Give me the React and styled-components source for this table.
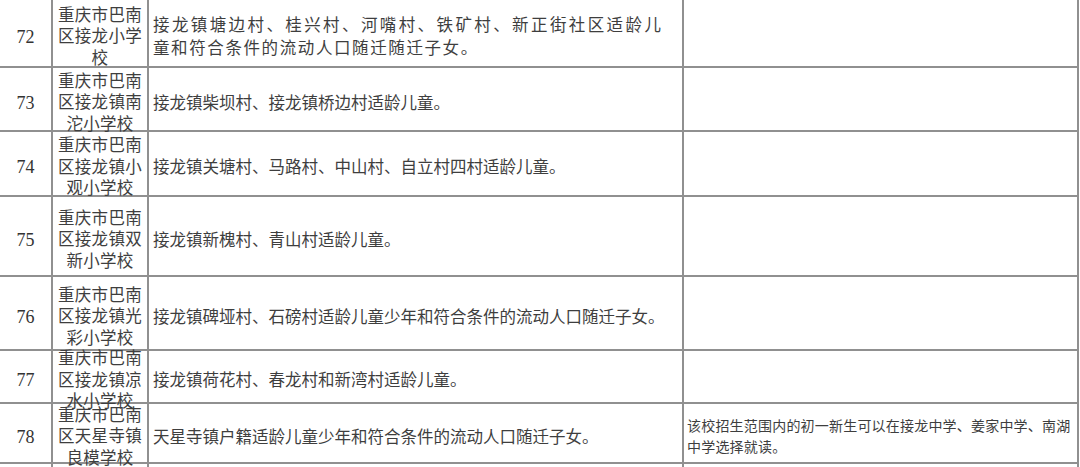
import React from 'react'
import styled, { createGlobalStyle } from 'styled-components'

const GlobalStyle = createGlobalStyle`
  html, body {
    margin: 0;
    padding: 0;
    background: #ffffff;
  }
  body {
    width: 1080px;
    height: 467px;
    overflow: hidden;
  }
`

const LINE = '2px solid #909090'

const Table = styled.div`
  display: grid;
  grid-template-columns: 53px 96px 535px 395px;
  width: 1079px;
  font-family: "Noto Sans CJK SC", "Noto Sans", sans-serif;
  color: #3e3e3e;
`

const Cell = styled.div`
  box-sizing: border-box;
  height: ${(p) => p.$h}px;
  border-right: ${LINE};
  border-bottom: ${LINE};
  display: flex;
  align-items: center;
  padding-top: 6px;
  overflow: visible;
  min-width: 0;
`

const NumCell = styled(Cell)`
  justify-content: center;
  padding-top: 8px;
  font-family: "Liberation Serif", "Times New Roman", serif;
  font-size: 18px;
  color: #333;
`

const NameCell = styled(Cell)`
  justify-content: center;
  text-align: center;
  font-size: 16.5px;
  letter-spacing: 0.3px;
  line-height: 21.5px;
  position: relative;
  z-index: 1;
`

const RangeCell = styled(Cell)`
  padding-left: 4px;
  font-size: 16.5px;
  line-height: 23px;
`

const RangeText = styled.div`
  display: flex;
  flex-direction: column;
`

const Line = styled.span`
  white-space: nowrap;
  letter-spacing: ${(p) => p.$ls || 0}px;
`

const NoteCell = styled(Cell)`
  padding-left: 3px;
  padding-right: 2px;
  font-size: 14px;
  letter-spacing: 0.2px;
  line-height: 21px;
`

const rows = [
  {
    no: 72,
    h: 68,
    name: '重庆市巴南区接龙小学校',
    range: [
      { t: '接龙镇塘边村、桂兴村、河嘴村、铁矿村、新正街社区适龄儿', ls: 2.4 },
      { t: '童和符合条件的流动人口随迁随迁子女。', ls: 1.6 },
    ],
  },
  {
    no: 73,
    h: 64,
    name: '重庆市巴南区接龙镇南沱小学校',
    range: [{ t: '接龙镇柴坝村、接龙镇桥边村适龄儿童。' }],
  },
  {
    no: 74,
    h: 65,
    name: '重庆市巴南区接龙镇小观小学校',
    range: [{ t: '接龙镇关塘村、马路村、中山村、自立村四村适龄儿童。' }],
  },
  {
    no: 75,
    h: 80,
    name: '重庆市巴南区接龙镇双新小学校',
    range: [{ t: '接龙镇新槐村、青山村适龄儿童。' }],
  },
  {
    no: 76,
    h: 74,
    name: '重庆市巴南区接龙镇光彩小学校',
    range: [{ t: '接龙镇碑垭村、石磅村适龄儿童少年和符合条件的流动人口随迁子女。' }],
  },
  {
    no: 77,
    h: 53,
    name: '重庆市巴南区接龙镇凉水小学校',
    range: [{ t: '接龙镇荷花村、春龙村和新湾村适龄儿童。' }],
  },
  {
    no: 78,
    h: 60,
    name: '重庆市巴南区天星寺镇良模学校',
    range: [{ t: '天星寺镇户籍适龄儿童少年和符合条件的流动人口随迁子女。' }],
    note: '该校招生范围内的初一新生可以在接龙中学、姜家中学、南湖中学选择就读。',
  },
  {
    no: 79,
    h: 64,
    name: '重庆市巴南区天星寺镇小学校',
    range: [{ t: '天星寺镇适龄儿童。' }],
  },
]

const App = () => (
  <>
    <GlobalStyle />
    <Table>
      {rows.map((r) => (
        <React.Fragment key={r.no}>
          <NumCell $h={r.h}>{r.no}</NumCell>
          <NameCell $h={r.h}>{r.name}</NameCell>
          <RangeCell $h={r.h}>
            <RangeText>
              {r.range.map((l) => (
                <Line key={l.t} $ls={l.ls}>
                  {l.t}
                </Line>
              ))}
            </RangeText>
          </RangeCell>
          <NoteCell $h={r.h}>{r.note}</NoteCell>
        </React.Fragment>
      ))}
    </Table>
  </>
)

export default App
